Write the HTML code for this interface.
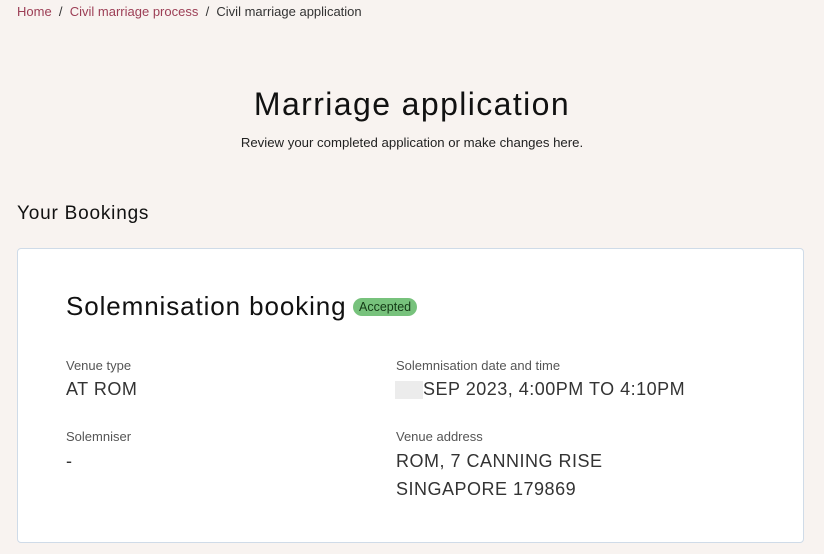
<!DOCTYPE html>
<html><head><meta charset="utf-8"><style>
body{margin:0;width:824px;height:554px;background:#f8f3f0;font-family:"Liberation Sans",sans-serif;color:#111;position:relative;overflow:hidden}
.a{position:absolute;white-space:nowrap}
.bc{top:4px;left:17px;font-size:13px;color:#333}
.bc a{color:#9c3e55;text-decoration:none}
.card{position:absolute;left:17px;top:248px;width:785px;height:293px;background:#fff;border:1px solid #cfdbe8;border-radius:4px}
.lbl{font-size:13px;color:#555}
.val{font-size:18px;color:#333;letter-spacing:0.5px}
</style></head><body>
<div class="a bc"><a>Home</a> &nbsp;/&nbsp; <a>Civil marriage process</a> &nbsp;/&nbsp; Civil marriage application</div>
<div class="a" style="top:86px;left:0;width:824px;text-align:center;font-size:32px;color:#111;letter-spacing:1.4px">Marriage application</div>
<div class="a" style="top:135px;left:0;width:824px;text-align:center;font-size:13.2px;color:#222">Review your completed application or make changes here.</div>
<div class="a" style="top:203px;left:17px;font-size:19px;color:#111;letter-spacing:0.8px">Your Bookings</div>
<div class="card"></div>
<div class="a" style="top:291px;left:66px;font-size:26px;color:#111;letter-spacing:0.9px">Solemnisation booking</div>
<div class="a" style="top:298px;left:353px;background:#77c27c;border-radius:10px;padding:2px 6px;font-size:12.5px;color:#143a16">Accepted</div>
<div class="a lbl" style="top:358px;left:66px">Venue type</div>
<div class="a val" style="top:379px;left:66px">AT ROM</div>
<div class="a lbl" style="top:429px;left:66px">Solemniser</div>
<div class="a val" style="top:451px;left:66px">-</div>
<div class="a lbl" style="top:358px;left:396px">Solemnisation date and time</div>
<div class="a" style="top:381px;left:395px;width:28px;height:18px;background:#ececec"></div>
<div class="a val" style="top:379px;left:423px">SEP 2023, 4:00PM TO 4:10PM</div>
<div class="a lbl" style="top:429px;left:396px">Venue address</div>
<div class="a val" style="top:451px;left:396px">ROM, 7 CANNING RISE</div>
<div class="a val" style="top:479px;left:396px">SINGAPORE 179869</div>
</body></html>
